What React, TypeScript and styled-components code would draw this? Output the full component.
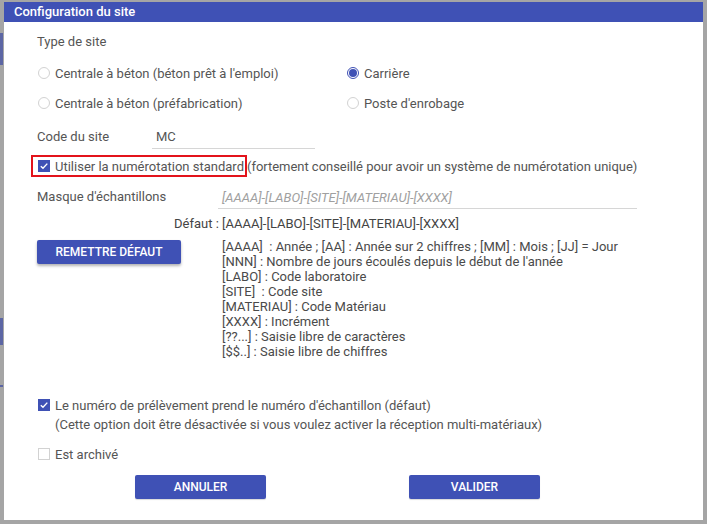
import React from "react";
import styled, { createGlobalStyle } from "styled-components";

const GlobalStyle = createGlobalStyle`
  html, body { margin: 0; padding: 0; background: #a5a5a5; }
  body { font-family: Roboto, "Noto Sans", Arial, sans-serif; }
  * { box-sizing: border-box; }
`;

const Page = styled.div`
  display: flex;
  width: 707px;
  height: 524px;
  padding-top: 2px;
  overflow: hidden;
`;

const Backdrop = styled.div`
  width: 4px;
  flex: none;
  display: flex;
  flex-direction: column;
`;

const BackBit = styled.div<{ $top: number; $h: number }>`
  margin-top: ${(p) => p.$top}px;
  height: ${(p) => p.$h}px;
  width: 3px;
  background: #5c66a4;
`;

const Dialog = styled.div`
  width: 699px;
  height: 518px;
  background: #fff;
  display: flex;
  flex-direction: column;
`;

const Header = styled.div`
  height: 20px;
  background: #3f51b5;
  color: #fff;
  font-size: 13px;
  font-weight: 500;
  line-height: 20px;
  padding-left: 10px;
`;

const Body = styled.div`
  padding: 10px 0 0 33px;
  width: 690px;
  color: #555;
  font-size: 13px;
  white-space: nowrap;
`;

const Label = styled.div`
  line-height: 20px;
`;

const RadioGrid = styled.div`
  margin-top: 6px;
  display: grid;
  grid-template-columns: 309px 1fr;
  grid-auto-rows: 30px;
`;

const RadioItem = styled.div`
  display: flex;
  align-items: center;
  gap: 5px;
  padding-left: 1px;
`;

const RadioCircle = styled.span<{ $on?: boolean }>`
  width: 12px;
  height: 12px;
  border-radius: 50%;
  border: 1px solid ${(p) => (p.$on ? "#3f51b5" : "#d2d2d2")};
  display: flex;
  align-items: center;
  justify-content: center;
  &::after {
    content: "";
    width: 8px;
    height: 8px;
    border-radius: 50%;
    background: ${(p) => (p.$on ? "#3f51b5" : "transparent")};
  }
`;

const FieldRow = styled.div<{ $mt: number }>`
  margin-top: ${(p) => p.$mt}px;
  display: flex;
  align-items: flex-end;
`;

const FieldLabel = styled.div<{ $w: number }>`
  width: ${(p) => p.$w}px;
  line-height: 24px;
  flex: none;
`;

const Field = styled.div<{ $w: number; $h: number; $placeholder?: boolean }>`
  width: ${(p) => p.$w}px;
  height: ${(p) => p.$h}px;
  border-bottom: 1px solid #d6d6d6;
  padding-left: 4px;
  line-height: ${(p) => p.$h}px;
  color: ${(p) => (p.$placeholder ? "#a0a0a0" : "#555")};
  font-style: ${(p) => (p.$placeholder ? "italic" : "normal")};
`;

const CheckRow = styled.div<{ $mt: number; $h?: number }>`
  margin-top: ${(p) => p.$mt}px;
  display: flex;
  align-items: center;
  height: ${(p) => p.$h ?? 20}px;
`;

const Highlight = styled.div`
  margin-left: -6px;
  height: 22px;
  border: 2px solid #e3131b;
  padding: 0 1px 0 5px;
  display: flex;
  align-items: center;
  gap: 5px;
`;

const CheckItem = styled.div`
  display: flex;
  align-items: center;
  gap: 5px;
  padding-left: 1px;
`;

const Box = styled.span<{ $on?: boolean }>`
  width: 12px;
  height: 12px;
  flex: none;
  background: ${(p) => (p.$on ? "#3f51b5" : "#fff")};
  border: 1px solid ${(p) => (p.$on ? "#3f51b5" : "#d2d2d2")};
  display: flex;
  align-items: center;
  justify-content: center;
`;

const Aside = styled.span`
  margin-left: 0;
  letter-spacing: -0.03px;
`;

const DefaultLine = styled.div`
  margin-top: 7px;
  padding-left: 137px;
  line-height: 16px;
  color: #444;
`;

const MaskRow = styled.div`
  margin-top: 8px;
  display: flex;
  align-items: flex-start;
  gap: 41px;
`;

const Button = styled.button<{ $w: number; $shadow?: boolean }>`
  width: ${(p) => p.$w}px;
  height: 24px;
  flex: none;
  border: none;
  border-radius: 2px;
  background: #3f51b5;
  color: #fff;
  font-family: Roboto, "Noto Sans", Arial, sans-serif;
  font-size: 12px;
  font-weight: 500;
  text-transform: uppercase;
  padding: 0;
  box-shadow: ${(p) => (p.$shadow ? "0 2px 3px rgba(0,0,0,0.3)" : "0 1px 1px rgba(0,0,0,0.15)")};
`;

const Legend = styled.div`
  line-height: 15px;
  color: #4a4a4a;
  margin-top: -1px;
  white-space: pre;
`;

const Note = styled.div`
  padding-left: 18px;
  line-height: 20px;
`;

const Actions = styled.div`
  margin-top: 11px;
  width: 601px;
  display: flex;
  justify-content: center;
  gap: 143px;
`;

const Check = () => (
  <svg width="10" height="10" viewBox="0 0 10 10">
    <path d="M1.8 5.2 L4 7.3 L8.3 2.6" fill="none" stroke="#fff" strokeWidth="1.4" />
  </svg>
);

const legend = [
  "[AAAA]  : Année ; [AA] : Année sur 2 chiffres ; [MM] : Mois ; [JJ] = Jour",
  "[NNN] : Nombre de jours écoulés depuis le début de l'année",
  "[LABO] : Code laboratoire",
  "[SITE]  : Code site",
  "[MATERIAU] : Code Matériau",
  "[XXXX] : Incrément",
  "[??...] : Saisie libre de caractères",
  "[$$..] : Saisie libre de chiffres",
];

export default function App() {
  return (
    <>
      <GlobalStyle />
      <Page>
        <Backdrop>
          <BackBit $top={31} $h={32} />
          <BackBit $top={253} $h={27} />
          <BackBit $top={40} $h={2} />
        </Backdrop>
        <Dialog>
          <Header>Configuration du site</Header>
          <Body>
            <Label>Type de site</Label>
            <RadioGrid>
              <RadioItem>
                <RadioCircle />
                Centrale à béton (béton prêt à l'emploi)
              </RadioItem>
              <RadioItem>
                <RadioCircle $on />
                Carrière
              </RadioItem>
              <RadioItem>
                <RadioCircle />
                Centrale à béton (préfabrication)
              </RadioItem>
              <RadioItem>
                <RadioCircle />
                Poste d'enrobage
              </RadioItem>
            </RadioGrid>
            <FieldRow $mt={7}>
              <FieldLabel $w={115}>Code du site</FieldLabel>
              <Field $w={163} $h={24}>MC</Field>
            </FieldRow>
            <CheckRow $mt={6} $h={22}>
              <Highlight>
                <Box $on>
                  <Check />
                </Box>
                Utiliser la numérotation standard
              </Highlight>
              <Aside>(fortement conseillé pour avoir un système de numérotation unique)</Aside>
            </CheckRow>
            <FieldRow $mt={8}>
              <FieldLabel $w={181}>Masque d'échantillons</FieldLabel>
              <Field $w={419} $h={22} $placeholder>
                [AAAA]-[LABO]-[SITE]-[MATERIAU]-[XXXX]
              </Field>
            </FieldRow>
            <DefaultLine>Défaut : [AAAA]-[LABO]-[SITE]-[MATERIAU]-[XXXX]</DefaultLine>
            <MaskRow>
              <Button $w={144} $shadow>
                Remettre défaut
              </Button>
              <Legend>
                {legend.map((l) => (
                  <div key={l}>{l}</div>
                ))}
              </Legend>
            </MaskRow>
            <CheckRow $mt={36}>
              <CheckItem>
                <Box $on>
                  <Check />
                </Box>
                Le numéro de prélèvement prend le numéro d'échantillon (défaut)
              </CheckItem>
            </CheckRow>
            <Note>(Cette option doit être désactivée si vous voulez activer la réception multi-matériaux)</Note>
            <CheckRow $mt={9}>
              <CheckItem>
                <Box />
                Est archivé
              </CheckItem>
            </CheckRow>
            <Actions>
              <Button $w={131}>Annuler</Button>
              <Button $w={131}>Valider</Button>
            </Actions>
          </Body>
        </Dialog>
      </Page>
    </>
  );
}
